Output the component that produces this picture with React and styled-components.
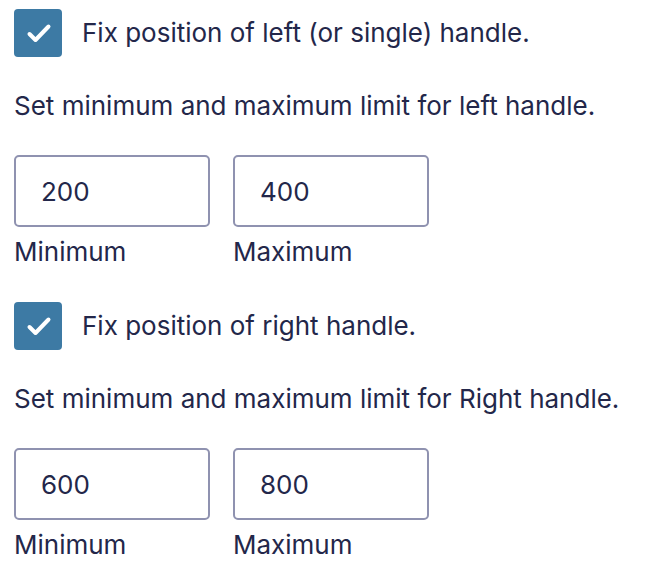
import React, { useState } from 'react';
import styled, { createGlobalStyle } from 'styled-components';

const Global = createGlobalStyle`
    body {
        margin: 0;
        background: #fff;
        font-family: Inter, 'Noto Sans', sans-serif;
        color: #23274a;
    }
`;

const Wrapper = styled.div`
    padding: 9px 14px 0 14px;
`;

const Section = styled.section`
    margin-bottom: 34px;
`;

const CheckRow = styled.label`
    display: flex;
    align-items: center;
    gap: 20px;
    font-size: 26px;
    line-height: 48px;
    cursor: pointer;
`;

const Box = styled.span`
    width: 48px;
    height: 48px;
    border-radius: 4px;
    background: ${p => (p.checked ? '#3d7aa4' : '#fff')};
    border: ${p => (p.checked ? 'none' : '2px solid #8f92b0')};
    display: flex;
    flex-shrink: 0;
`;

const P = styled.p`
    font-size: 26px;
    line-height: 33px;
    margin: 32px 0 33px 0;
`;

const Fields = styled.div`
    display: flex;
    gap: 23px;
`;

const Field = styled.div`
    display: flex;
    flex-direction: column;
    gap: 8px;
`;

const Input = styled.input`
    box-sizing: border-box;
    width: 196px;
    height: 72px;
    border: 2px solid #8f92b0;
    border-radius: 5px;
    padding: 0 0 0 25px;
    font-family: inherit;
    font-size: 26px;
    color: #23274a;
    outline: none;
`;

const Label = styled.label`
    font-size: 26px;
    line-height: 33px;
`;

const Check = ({ checked, onChange, children }) => (
    <CheckRow onClick={onChange}>
        <Box checked={checked}>
            {checked && (
                <svg width="48" height="48" viewBox="0 0 48 48" fill="none">
                    <path d="M15.5 25l6 6L34.5 17.5" stroke="#fff" strokeWidth="4" strokeLinecap="round" strokeLinejoin="round" />
                </svg>
            )}
        </Box>
        {children}
    </CheckRow>
);

const Limits = ({ title, min, max }) => {
    const [lo, setLo] = useState(min);
    const [hi, setHi] = useState(max);
    return (
        <>
            <P>{title}</P>
            <Fields>
                <Field>
                    <Input value={lo} onChange={e => setLo(e.target.value)} />
                    <Label>Minimum</Label>
                </Field>
                <Field>
                    <Input value={hi} onChange={e => setHi(e.target.value)} />
                    <Label>Maximum</Label>
                </Field>
            </Fields>
        </>
    );
};

const App = () => {
    const [left, setLeft] = useState(true);
    const [right, setRight] = useState(true);
    return (
        <Wrapper>
            <Global />
            <Section>
                <Check checked={left} onChange={() => setLeft(!left)}>Fix position of left (or single) handle.</Check>
                <Limits title="Set minimum and maximum limit for left handle." min="200" max="400" />
            </Section>
            <Section>
                <Check checked={right} onChange={() => setRight(!right)}>Fix position of right handle.</Check>
                <Limits title="Set minimum and maximum limit for Right handle." min="600" max="800" />
            </Section>
        </Wrapper>
    );
};

export default App;
